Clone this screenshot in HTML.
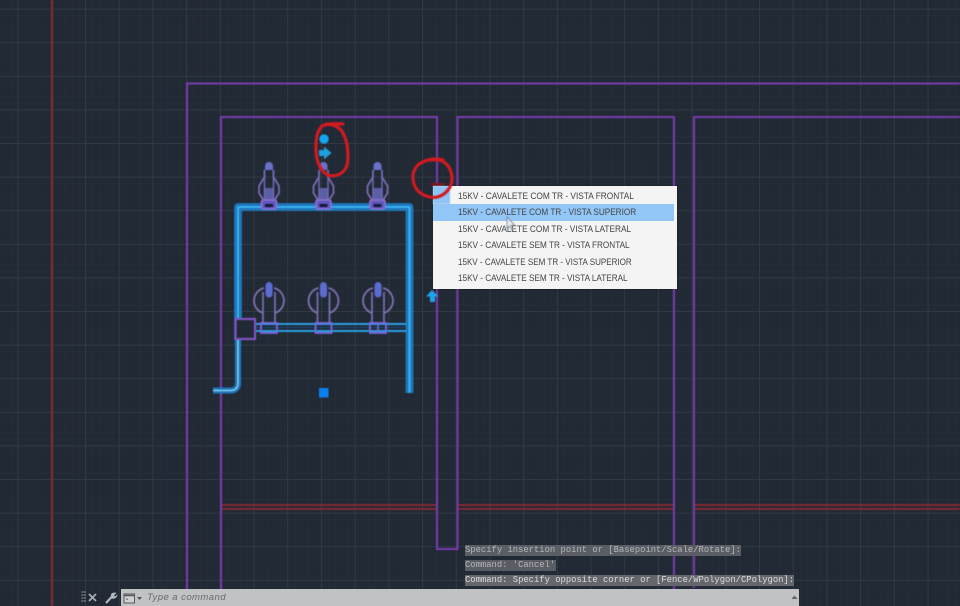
<!DOCTYPE html>
<html lang="pt">
<head>
<meta charset="utf-8">
<title>CAD</title>
<style>
html,body{margin:0;padding:0;background:#212934;}
#s{position:relative;width:960px;height:606px;overflow:hidden;background:#212934;font-family:"Liberation Sans",sans-serif;}
svg{position:absolute;left:0;top:0;}
svg.d{filter:blur(.45px);}
.menu{position:absolute;left:433px;top:185.500px;width:244px;height:103px;background:#f4f4f4;box-shadow:0 0 2px rgba(0,0,0,.4);}
.menu .t{position:absolute;left:25px;font-size:9.4px;line-height:16px;height:16px;color:#444;white-space:nowrap;transform-origin:left center;filter:blur(.3px);}
.menu .hl{position:absolute;left:0;top:18.500px;width:241px;height:16.500px;background:#92c6f6;}
.cmd{position:absolute;left:465px;height:11px;background:#5a5d63;font-family:"Liberation Mono",monospace;font-size:8.85px;line-height:11px;color:#b4b7bb;white-space:nowrap;filter:blur(.35px);}
.bar{position:absolute;left:121px;top:589px;width:678px;height:17px;background:#c1c2c4;}
.ph{position:absolute;left:147px;top:592px;font-size:9.5px;line-height:12px;font-style:italic;color:#666a6f;letter-spacing:.45px;filter:blur(.25px);}
</style>
</head>
<body>
<div id="s">
<svg width="960" height="606" viewBox="0 0 960 606" xmlns="http://www.w3.org/2000/svg">
<defs>
<pattern id="minor" width="6.74" height="6.72" patternUnits="userSpaceOnUse" x="-2" y="2">
<path d="M0 0V6.72M0 0H6.74" stroke="#262e39" stroke-width="1" fill="none"/>
</pattern>
<pattern id="major" width="33.7" height="33.6" patternUnits="userSpaceOnUse" x="17.6" y="8.6">
<path d="M.5 0V33.6M0 .5H33.7" stroke="#2f3843" stroke-width="1" fill="none"/>
</pattern>
</defs>
<rect width="960" height="606" fill="#212934"/>
<rect width="960" height="606" fill="url(#minor)"/>
<rect width="960" height="606" fill="url(#major)"/>
</svg>
<svg class="d" width="960" height="606" viewBox="0 0 960 606" xmlns="http://www.w3.org/2000/svg">
<defs>
<g id="top">
<path d="M-4.500 -15V-8L-10 1V8L-5 16M4.500 -15V-8L10 1V8L5 16" fill="none" stroke="#7a6cb0" stroke-width="1.800"/>
<path d="M-4 -19A4 4 0 0 1 4 -19V-15H-4Z" fill="#6a70c8"/>
<path d="M-4.500 -15V14M4.500 -15V14" fill="none" stroke="#6f6bb8" stroke-width="1.500"/>
<path d="M-4 3H4V16H-4Z" fill="#6a6cc0" opacity=".8"/>
<rect x="-7.500" y="15" width="15" height="9" rx="2" fill="#5f58bc" stroke="#8a70d0" stroke-width="1.800"/>
<rect x="-4" y="19" width="8" height="3" fill="#15183a"/>
</g>
<g id="bot">
<path d="M-5 -15A13 13 0 0 0 -6 10M5 -15A13 13 0 0 1 6 10" fill="none" stroke="#8072b0" stroke-width="1.800"/>
<path d="M-6 -11V20M6 -11V20" fill="none" stroke="#7c70b4" stroke-width="1.700"/>
<path d="M-3.500 -17A3.500 4 0 0 1 3.500 -17V-9A3.500 3.500 0 0 1 -3.500 -9Z" fill="#5c6cd0"/>
<rect x="-8" y="20" width="16" height="10" fill="none" stroke="#7c68dc" stroke-width="1.800"/>
</g>
</defs>

<!-- red lines -->
<path d="M52 0V606" stroke="#8a2d33" stroke-width="2" fill="none"/>
<g stroke="#a02a30" stroke-width="1.500" fill="none">
<path d="M221 505H437M221 509H437M457 505H674M457 509H674M694 505H960M694 509H960"/>
</g>

<!-- purple outlines -->
<g stroke="#7a3cb0" stroke-width="2" fill="none">
<path d="M187 606V83.500H960"/>
<path d="M221 606V117H437V549H457.500V117H674V545M694 545V117H960"/>
<path d="M674 540V606M694 540V588"/>
</g>

<!-- cyan frame -->
<g fill="none" stroke-linejoin="round">
<path d="M238 340V207H409.500V393" stroke="#1d86d2" stroke-width="7.500"/>
<path d="M238 340V207H409.500V393" stroke="#1a5f9e" stroke-width="4.500"/>
<path d="M238 340V207H409.500V393" stroke="#38b0f0" stroke-width="2.500"/>
<path d="M238 340V383Q238 390.500 230 390.500H213" stroke="#1d86d2" stroke-width="6"/>
<path d="M238 340V383Q238 390.500 230 390.500H213" stroke="#1a5f9e" stroke-width="4"/>
<path d="M238 340V383Q238 390.500 230 390.500H213" stroke="#6fc6f2" stroke-width="2"/>
<path d="M255 324H406M255 331H406" stroke="#2a9ee6" stroke-width="2"/>
<path d="M255 327.500H406" stroke="#1a4f80" stroke-width="1"/>
</g>

<!-- terminals -->
<use href="#top" x="269" y="185"/>
<use href="#top" x="323.500" y="185"/>
<use href="#top" x="377.500" y="185"/>
<use href="#bot" x="269" y="303"/>
<use href="#bot" x="323.500" y="303"/>
<use href="#bot" x="378" y="303"/>
<path d="M378 323V333" stroke="#7c68dc" stroke-width="1.600"/>

<!-- box -->
<rect x="235.500" y="319" width="19.500" height="20" fill="#212934" stroke="#7e54c6" stroke-width="2.200"/>

<!-- grips -->
<rect x="319" y="388" width="9.500" height="9.500" fill="#0b7fef"/>
<circle cx="324" cy="139" r="4.700" fill="#12a6ee"/>
<path d="M319 150H324V146.500L331.500 153L324 159.500V156H319Z" fill="#1fa0dd"/>
<path d="M432 290L438.500 296.500H435V302H430V296.500H426Z" fill="#1fa4ea"/>

<!-- marker -->
<path d="M430 183H446L441 189H434Z" fill="#7b1a20"/>
</svg>

<div class="menu">
<div class="hl"></div>
<div class="t" style="top:2px;transform:scaleX(.888)">15KV - CAVALETE COM TR - VISTA FRONTAL</div>
<div class="t" style="top:18.500px;transform:scaleX(.873)">15KV - CAVALETE COM TR - VISTA SUPERIOR</div>
<div class="t" style="top:35px;transform:scaleX(.883)">15KV - CAVALETE COM TR - VISTA LATERAL</div>
<div class="t" style="top:51.500px;transform:scaleX(.873)">15KV - CAVALETE SEM TR - VISTA FRONTAL</div>
<div class="t" style="top:68px;transform:scaleX(.858)">15KV - CAVALETE SEM TR - VISTA SUPERIOR</div>
<div class="t" style="top:84.500px;transform:scaleX(.872)">15KV - CAVALETE SEM TR - VISTA LATERAL</div>
</div>

<svg class="d" width="960" height="606" viewBox="0 0 960 606" xmlns="http://www.w3.org/2000/svg">
<!-- corner / highlight notch -->
<rect x="433" y="186" width="17" height="18" fill="#8fc4f4"/>
<!-- red annotation circles -->
<g fill="none" stroke="#d21a20" stroke-width="3.200" stroke-linecap="round" stroke-linejoin="round">
<path d="M343 124C336 123.500 328 123.500 322 126C317 131 315.500 140 316 150C316.500 161 320 172 329 175.500C337 177 346 173 347.500 163C349 151 347 138 341 130C337 126 332 124 326 124"/>
<path d="M443 160C434 157.500 424 160 418 165C413 170 411.800 177 414 184C416.500 192 424 197 434 197.500C443 197 450 190 451.800 182C452.800 172 449 164 441 160.500C437 159.500 433 159.500 430 160"/>
</g>
<!-- cursor -->
<path d="M507 217V228L509.500 226L512 230.500L513.300 230L511 225.500L514.500 225Z" fill="#e8eef5" stroke="#66707c" stroke-width=".7"/>
</svg>

<div class="cmd" style="top:545px;width:276px;">Specify insertion point or [Basepoint/Scale/Rotate]:</div>
<div class="cmd" style="top:560px;width:91px;">Command: 'Cancel'</div>
<div class="cmd" style="top:575px;width:329px;color:#dcdde0;background:#63666b;">Command: Specify opposite corner or [Fence/WPolygon/CPolygon]:</div>

<div class="bar"></div>
<div class="ph">Type a command</div>
<svg width="960" height="606" viewBox="0 0 960 606" xmlns="http://www.w3.org/2000/svg">
<!-- grip dots -->
<g fill="#5f656d">
<rect x="81.500" y="591" width="2" height="2"/><rect x="84" y="591" width="2" height="2"/>
<rect x="81.500" y="594" width="2" height="2"/><rect x="84" y="594" width="2" height="2"/>
<rect x="81.500" y="597" width="2" height="2"/><rect x="84" y="597" width="2" height="2"/>
<rect x="81.500" y="600" width="2" height="2"/><rect x="84" y="600" width="2" height="2"/>
</g>
<!-- close -->
<path d="M89 594L96 601M96 594L89 601" stroke="#a8acb2" stroke-width="1.800" fill="none"/>
<!-- wrench -->
<path d="M106 603L112 596.500" stroke="#b4b8bd" stroke-width="2.200" fill="none"/>
<path d="M112 593C114 592.500 116 592.500 116.500 593L114 595.500L115 596.500L117.500 594.500C117.500 597 115 599.500 111.500 598.500C110.500 596.500 110.500 594.500 112 593Z" fill="#b4b8bd"/>
<!-- console icon -->
<rect x="124" y="594" width="10.500" height="9" fill="#cfd0d2" stroke="#54585e" stroke-width="1"/>
<path d="M124 595.500H134.500" stroke="#54585e" stroke-width="1.500"/>
<path d="M126 598.500L128 599.800" stroke="#54585e" stroke-width=".8" fill="none"/>
<path d="M137 597H142L139.500 600Z" fill="#52565c"/>
<!-- up arrow -->
<path d="M791.500 599L794.500 595.500L797.500 599Z" fill="#5f6368"/>
</svg>
</div>
</body>
</html>
